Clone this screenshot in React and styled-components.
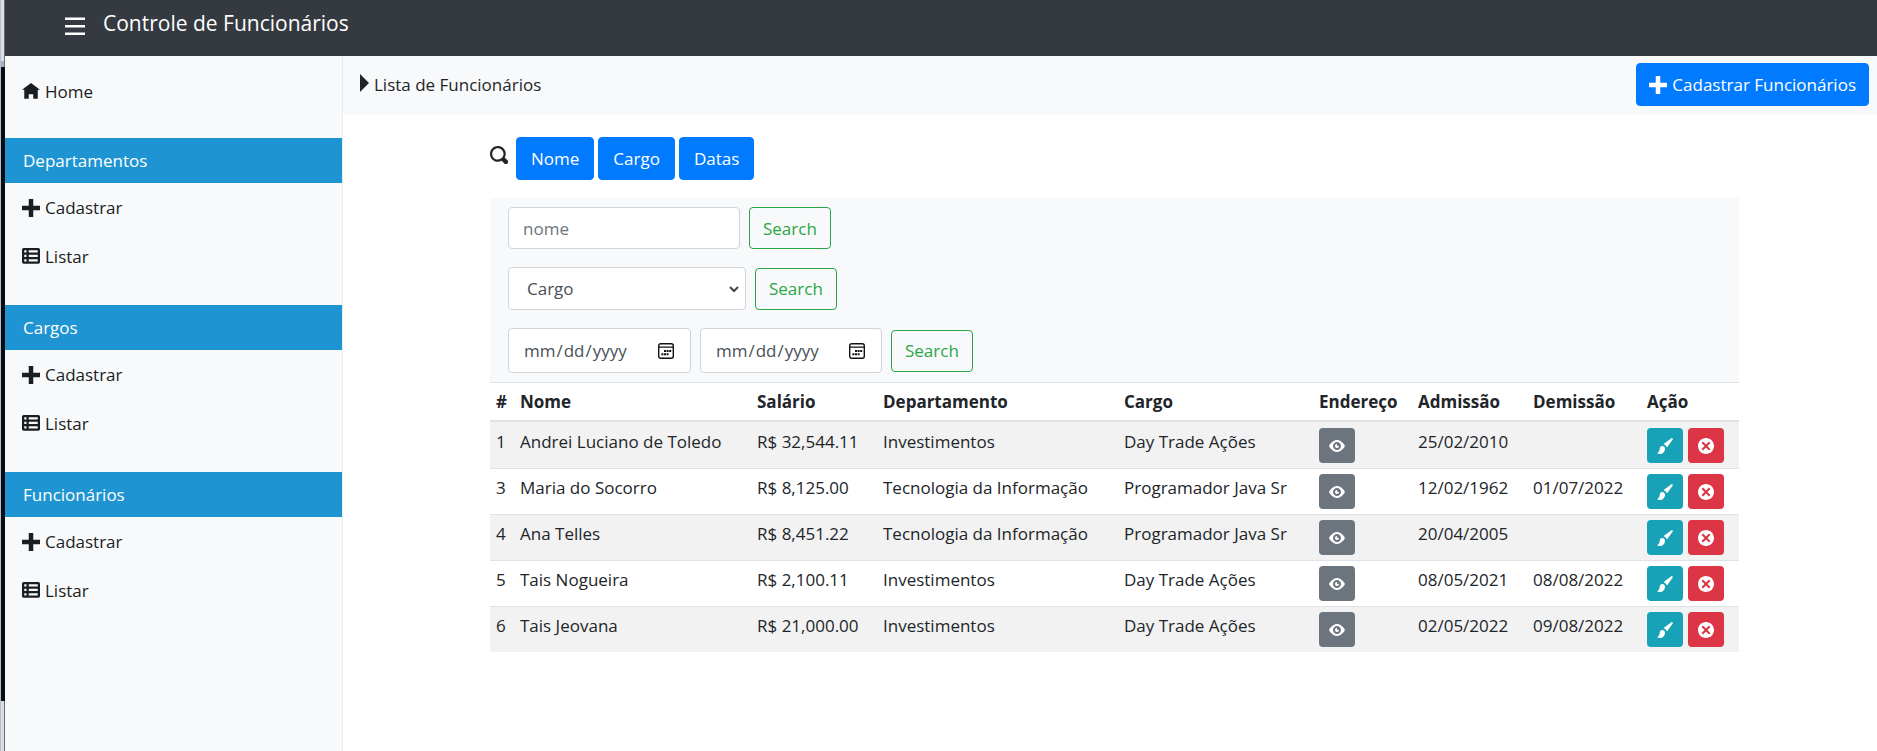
import React from 'react';
import styled, { createGlobalStyle } from 'styled-components';

const GlobalStyle = createGlobalStyle`
  *, *::before, *::after { box-sizing: border-box; }
  body {
    margin: 0;
    background: #fff;
    color: #212529;
    font-family: "Open Sans", "Noto Sans", sans-serif;
    font-size: 17px;
    line-height: 27px;
  }
  button, input, select { font: inherit; }
`;

const ICONS = {
  menu: 'M0 1v1h8v-1h-8zm0 2.97v1h8v-1h-8zm0 3v1h8v-1h-8z',
  home: 'M4 0l-4 3h1v4h2v-2h2v2h2v-4.03l1 .03-4-3z',
  plus: 'M3 0v3h-3v2h3v3h2v-3h3v-2h-3v-3h-2z',
  sheet:
    'M.75 0c-.402 0-.75.348-.75.75v5.5c0 .402.348.75.75.75h6.5c.402 0 .75-.348.75-.75v-5.5c0-.402-.348-.75-.75-.75h-6.5zm.25 1h1v1h-1v-1zm2 0h4v1h-4v-1zm-2 2h1v1h-1v-1zm2 0h4v1h-4v-1zm-2 2h1v1h-1v-1zm2 0h4v1h-4v-1z',
  caret: 'M0 0v8l4-4-4-4z',
  search:
    'M3.5 0c-1.93 0-3.5 1.57-3.5 3.5s1.57 3.5 3.5 3.5c.59 0 1.17-.14 1.66-.41a1 1 0 0 0 .13.13l1 1a1.02 1.02 0 1 0 1.44-1.44l-1-1a1 1 0 0 0-.16-.13c.27-.49.44-1.06.44-1.66 0-1.93-1.55-3.5-3.5-3.5zm0 1c1.39 0 2.5 1.1 2.5 2.5 0 .66-.24 1.27-.66 1.72-.01.01-.02.02-.03.03a1 1 0 0 0-.13.13c-.44.4-1.04.63-1.69.63-1.39 0-2.5-1.1-2.5-2.5s1.1-2.5 2.5-2.5z',
  eye: 'M4.03 1c-2.53 0-4.03 3-4.03 3s1.5 3 4.03 3c2.47 0 3.97-3 3.97-3s-1.5-3-3.97-3zm-.03 1c1.11 0 2 .9 2 2 0 1.11-.89 2-2 2-1.1 0-2-.89-2-2 0-1.1.9-2 2-2zm0 1c-.55 0-1 .45-1 1s.45 1 1 1 1-.45 1-1c0-.1-.04-.19-.06-.28-.08.16-.24.28-.44.28-.28 0-.5-.22-.5-.5 0-.2.12-.36.28-.44-.09-.03-.18-.06-.28-.06z',
  brush:
    'M7.44.03c-.03 0-.04.02-.06.03l-3.75 2.66c-.04.03-.1.11-.13.16l-.13.25c.72.23 1.27.78 1.5 1.5l.25-.13c.05-.03.12-.08.16-.13l2.66-3.75c.03-.05.04-.09 0-.13l-.44-.44c-.02-.02-.04-.03-.06-.03zm-4.78 3.97c-.74 0-1.31.61-1.31 1.34 0 .99-.55 1.85-1.34 2.31.39.22.86.34 1.34.34 1.47 0 2.66-1.18 2.66-2.66 0-.74-.61-1.34-1.34-1.34z',
  remove:
    'M4 0c-2.21 0-4 1.79-4 4s1.79 4 4 4 4-1.79 4-4-1.79-4-4-4zm-1.5 1.78l1.5 1.5 1.5-1.5.72.72-1.5 1.5 1.5 1.5-.72.72-1.5-1.5-1.5 1.5-.72-.72 1.5-1.5-1.5-1.5.72-.72z',
};

const Glyph = styled.svg`
  display: block;
  flex: none;
  height: ${(p) => p.$size}px;
  width: ${(p) => p.$width || p.$size}px;
  fill: currentColor;
`;

function Icon({ name, size = 18 }) {
  const narrow = name === 'caret';
  return (
    <Glyph
      $size={size}
      $width={narrow ? size / 2 : size}
      viewBox={narrow ? '0 0 4 8' : '0 0 8 8'}
      aria-hidden="true"
    >
      <path d={ICONS[name]} />
    </Glyph>
  );
}

const Shell = styled.div`
  display: flex;
  min-height: 100vh;
`;

const Edge = styled.div`
  display: flex;
  flex-direction: column;
  width: 5px;
  flex: none;
  border-left: 1px solid #b3bfd0;
  border-right: 1px solid #6b6b6d;
  background: #dcdde0;
`;

const EdgeTop = styled.div`
  height: 67px;
  border-bottom: 6px solid #a3b1c2;
`;

const EdgeDark = styled.div`
  height: 634px;
  margin-right: -1px;
  background: #060d12;
`;

const Page = styled.div`
  flex: 1;
  min-width: 0;
  display: flex;
  flex-direction: column;
`;

const Header = styled.header`
  display: flex;
  align-items: flex-start;
  gap: 18px;
  height: 56px;
  padding: 10px 60px;
  background: #343a40;
  color: #fff;
`;

const MenuButton = styled.button`
  display: flex;
  padding: 5px 0;
  border: 0;
  background: none;
  color: inherit;
`;

const Brand = styled.a`
  color: inherit;
  text-decoration: none;
  font-size: 21px;
`;

const Columns = styled.div`
  flex: 1;
  display: flex;
`;

const Sidebar = styled.nav`
  width: 338px;
  flex: none;
  border-right: 1px solid #e9ecef;
  background: #f8f9fa;
`;

const NavLink = styled.a`
  display: flex;
  align-items: center;
  gap: 5px;
  height: 49px;
  padding: 0 17px;
  color: #1b1e21;
  text-decoration: none;
`;

const HomeArea = styled.div`
  padding: 11px 0 22px;
`;

const Group = styled.section`
  padding: 0 0 24px;
`;

const GroupTitle = styled.h2`
  margin: 0;
  height: 45px;
  padding: 0 18px;
  background: #1e94d2;
  color: #fff;
  font-size: 17px;
  font-weight: 400;
  line-height: 45px;
`;

const Main = styled.main`
  flex: 1;
  min-width: 0;
`;

const TitleBar = styled.div`
  display: flex;
  align-items: flex-start;
  justify-content: space-between;
  height: 59px;
  padding: 7px 8px 9px 17px;
  background: #f8f9fa;
`;

const PageTitle = styled.h1`
  display: flex;
  align-items: flex-start;
  gap: 5px;
  margin: 0;
  padding: 8px 0;
  font-size: 17px;
  font-weight: 400;
  svg { margin-top: 3px; }
`;

const Button = styled.button`
  display: inline-flex;
  align-items: center;
  justify-content: center;
  gap: 5px;
  height: 43px;
  padding: 0 ${(p) => p.$pad || 13}px;
  border: 1px solid ${(p) => (p.$outline ? '#28a745' : '#007bff')};
  border-radius: 4px;
  background: ${(p) => (p.$outline ? 'transparent' : '#007bff')};
  color: ${(p) => (p.$outline ? '#28a745' : '#fff')};
  white-space: nowrap;
`;

const Content = styled.div`
  padding: 22px 138px 0 147px;
`;

const FilterTabs = styled.div`
  display: flex;
  align-items: flex-start;
  gap: 8px;
  margin-bottom: 18px;
  > svg { margin-top: 9px; }
`;

const TabButtons = styled.div`
  display: flex;
  gap: 4px;
`;

const Filters = styled.div`
  display: flex;
  flex-direction: column;
  gap: 18px;
  padding: 9px 18px;
  background: #f8f9fa;
`;

const FilterForm = styled.form`
  display: flex;
  align-items: center;
  gap: 9px;
  ${Button} { height: 42px; }
`;

const Field = styled.input`
  width: ${(p) => p.$width}px;
  height: 42px;
  padding: 0 14px;
  border: 1px solid #ced4da;
  border-radius: 4px;
  background: #fff;
  color: #495057;
  &::placeholder { color: #6c757d; }
`;

const chevron = encodeURIComponent(
  '<svg xmlns="http://www.w3.org/2000/svg" viewBox="0 0 12 8"><path d="M2 2l4 4 4-4" fill="none" stroke="#3f464d" stroke-width="2"/></svg>'
);

const Select = styled(Field).attrs({ as: 'select' })`
  height: 43px;
  padding: 0 18px;
  appearance: none;
  background: #fff url("data:image/svg+xml,${chevron}") no-repeat right 5px center / 12px 8px;
`;

const calendar = encodeURIComponent(
  '<svg xmlns="http://www.w3.org/2000/svg" viewBox="0 0 16 16"><rect x="0.7" y="0.7" width="14.6" height="14.6" rx="2" fill="none" stroke="#111" stroke-width="1.4"/><path d="M1 4.2h14" stroke="#111" stroke-width="1.2"/><path d="M6 7h2v2h-2zM8.600 7h2v2h-2zM11.200 7h2v2h-2zM3.400 10.200h2v2h-2zM6 10.200h2v2h-2zM8.600 10.200h2v2h-2z" fill="#111"/></svg>'
);

const DateField = styled(Field).attrs({ type: 'date' })`
  height: 45px;
  padding: 0 16px 0 14px;
  &::-webkit-calendar-picker-indicator {
    width: 16px;
    height: 16px;
    padding: 0;
    background: url("data:image/svg+xml,${calendar}") center / 16px 16px no-repeat;
  }
`;

const Table = styled.table`
  width: 100%;
  table-layout: fixed;
  border-collapse: separate;
  border-spacing: 0;
`;

const HeadCell = styled.th`
  height: 40px;
  padding: 0 6px;
  border-top: 1px solid #dee2e6;
  border-bottom: 2px solid #dee2e6;
  font-weight: 700;
  text-align: left;
`;

const Row = styled.tr`
  &:nth-child(odd) { background: #f2f2f2; }
  & + & > td { border-top-color: #dee2e6; }
`;

const Cell = styled.td`
  height: 46px;
  padding: 5px 6px;
  border-top: 1px solid transparent;
  vertical-align: top;
  white-space: nowrap;
`;

const Actions = styled.div`
  display: flex;
  gap: 5px;
`;

const IconButton = styled.button`
  display: flex;
  align-items: center;
  justify-content: center;
  width: 36px;
  height: 35px;
  padding: 0;
  border: 0;
  border-radius: 4px;
  background: ${(p) => p.$color};
  color: #fff;
`;

const groups = ['Departamentos', 'Cargos', 'Funcionários'];

const columns = [
  ['#', 24],
  ['Nome', 237],
  ['Salário', 126],
  ['Departamento', 241],
  ['Cargo', 195],
  ['Endereço', 99],
  ['Admissão', 115],
  ['Demissão', 114],
  ['Ação', 98],
];

const employees = [
  [1, 'Andrei Luciano de Toledo', 'R$ 32,544.11', 'Investimentos', 'Day Trade Ações', '25/02/2010', ''],
  [3, 'Maria do Socorro', 'R$ 8,125.00', 'Tecnologia da Informação', 'Programador Java Sr', '12/02/1962', '01/07/2022'],
  [4, 'Ana Telles', 'R$ 8,451.22', 'Tecnologia da Informação', 'Programador Java Sr', '20/04/2005', ''],
  [5, 'Tais Nogueira', 'R$ 2,100.11', 'Investimentos', 'Day Trade Ações', '08/05/2021', '08/08/2022'],
  [6, 'Tais Jeovana', 'R$ 21,000.00', 'Investimentos', 'Day Trade Ações', '02/05/2022', '09/08/2022'],
];

export default function App() {
  return (
    <>
      <GlobalStyle />
      <Shell>
        <Edge>
          <EdgeTop />
          <EdgeDark />
        </Edge>
        <Page>
          <Header>
            <MenuButton type="button" aria-label="Menu">
              <Icon name="menu" size={20} />
            </MenuButton>
            <Brand href="#">Controle de Funcionários</Brand>
          </Header>
          <Columns>
            <Sidebar>
              <HomeArea>
                <NavLink href="#"><Icon name="home" />Home</NavLink>
              </HomeArea>
              {groups.map((title) => (
                <Group key={title}>
                  <GroupTitle>{title}</GroupTitle>
                  <NavLink href="#"><Icon name="plus" />Cadastrar</NavLink>
                  <NavLink href="#"><Icon name="sheet" />Listar</NavLink>
                </Group>
              ))}
            </Sidebar>
            <Main>
              <TitleBar>
                <PageTitle><Icon name="caret" />Lista de Funcionários</PageTitle>
                <Button type="button" $pad={12}><Icon name="plus" />Cadastrar Funcionários</Button>
              </TitleBar>
              <Content>
                <FilterTabs>
                  <Icon name="search" />
                  <TabButtons>
                    <Button type="button" $pad={14}>Nome</Button>
                    <Button type="button" $pad={14}>Cargo</Button>
                    <Button type="button" $pad={14}>Datas</Button>
                  </TabButtons>
                </FilterTabs>
                <Filters>
                  <FilterForm>
                    <Field $width={232} type="text" placeholder="nome" aria-label="Nome" />
                    <Button type="button" $outline>Search</Button>
                  </FilterForm>
                  <FilterForm>
                    <Select $width={238} aria-label="Cargo">
                      <option>Cargo</option>
                    </Select>
                    <Button type="button" $outline>Search</Button>
                  </FilterForm>
                  <FilterForm>
                    <DateField $width={183} aria-label="Data inicial" />
                    <DateField $width={182} aria-label="Data final" />
                    <Button type="button" $outline>Search</Button>
                  </FilterForm>
                </Filters>
                <Table>
                  <colgroup>
                    {columns.map(([label, width]) => (
                      <col key={label} width={width} />
                    ))}
                  </colgroup>
                  <thead>
                    <tr>
                      {columns.map(([label]) => (
                        <HeadCell key={label} scope="col">{label}</HeadCell>
                      ))}
                    </tr>
                  </thead>
                  <tbody>
                    {employees.map(([id, name, salary, department, role, hired, left]) => (
                      <Row key={id}>
                        <Cell>{id}</Cell>
                        <Cell>{name}</Cell>
                        <Cell>{salary}</Cell>
                        <Cell>{department}</Cell>
                        <Cell>{role}</Cell>
                        <Cell>
                          <IconButton type="button" $color="#6c757d" aria-label="Ver endereço">
                            <Icon name="eye" size={16} />
                          </IconButton>
                        </Cell>
                        <Cell>{hired}</Cell>
                        <Cell>{left}</Cell>
                        <Cell>
                          <Actions>
                            <IconButton type="button" $color="#17a2b8" aria-label="Editar">
                              <Icon name="brush" size={16} />
                            </IconButton>
                            <IconButton type="button" $color="#dc3545" aria-label="Excluir">
                              <Icon name="remove" size={16} />
                            </IconButton>
                          </Actions>
                        </Cell>
                      </Row>
                    ))}
                  </tbody>
                </Table>
              </Content>
            </Main>
          </Columns>
        </Page>
      </Shell>
    </>
  );
}
